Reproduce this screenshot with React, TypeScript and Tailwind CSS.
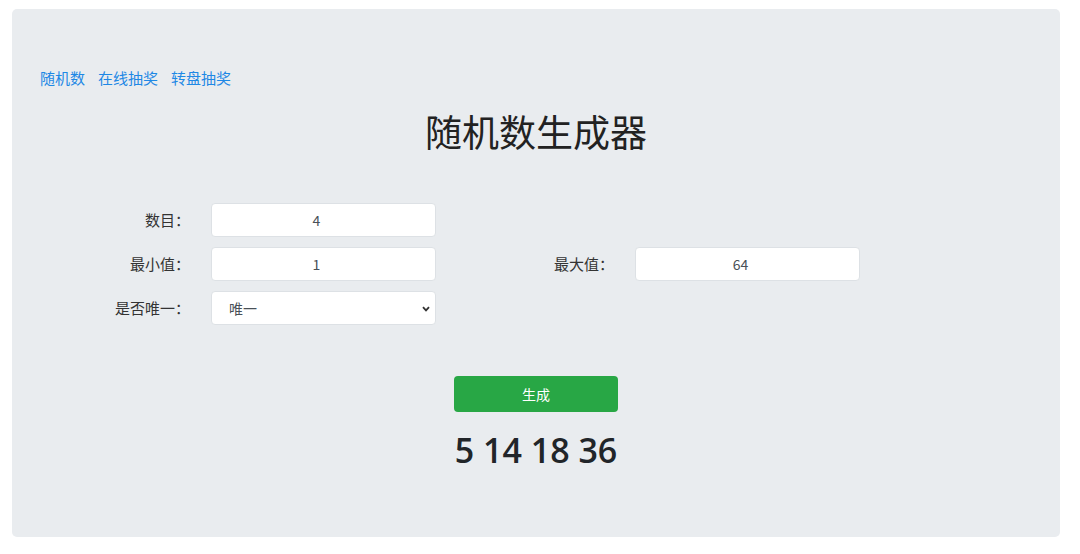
const cjk = "font-['Microsoft_YaHei','Noto_Sans_CJK_SC',sans-serif]"

function Field({ label, value }: { label: string; value: string }) {
  return (
    <div className="flex items-center">
      <label className="w-[178px] text-right text-[15px] text-[#333]">{label}</label>
      <input
        readOnly
        value={value}
        className="ml-[21px] w-[225px] h-[34px] rounded-[4px] border border-[#dde1e5] bg-white pr-[14px] text-center text-[14px] text-[#495057] outline-none"
      />
    </div>
  )
}

export default function App() {
  return (
    <div className={`bg-white pt-[9px] px-[12px] pb-[17px] ${cjk}`}>
      <div className="bg-[#e9ecef] rounded-[5px] w-[1048px] h-[528px] pt-[59px]">
        <nav className="flex gap-[13px] pl-[28px] text-[15px] text-[#1e88e5] leading-[20px]">
          <a href="#">随机数</a>
          <a href="#">在线抽奖</a>
          <a href="#">转盘抽奖</a>
        </nav>
        <h1 className="text-center text-[37px] leading-[48px] text-[#222] mt-[19px]">
          随机数生成器
        </h1>

        <div className="mt-[48px] flex flex-col gap-[10px]">
          <Field label="数目：" value="4" />
          <div className="flex">
            <Field label="最小值：" value="1" />
            <Field label="最大值：" value="64" />
          </div>
          <div className="flex items-center">
            <label className="w-[178px] text-right text-[15px] text-[#333]">是否唯一：</label>
            <div className="relative ml-[21px] w-[225px] h-[34px] rounded-[4px] border border-[#dde1e5] bg-white">
              <select className="appearance-none w-full h-full bg-transparent pl-[17px] text-[14px] text-[#495057] outline-none">
                <option>唯一</option>
                <option>不唯一</option>
              </select>
              <svg
                className="absolute right-[5px] top-[14px] pointer-events-none"
                width="8"
                height="6"
                viewBox="0 0 8 6"
              >
                <path d="M1 1.2 L4 4.4 L7 1.2" stroke="#333" strokeWidth="1.8" fill="none" />
              </svg>
            </div>
          </div>
        </div>

        <div className="mt-[51px] flex flex-col items-center">
          <button className="w-[164px] h-[36px] rounded-[4px] bg-[#28a745] text-white text-[14px]">
            生成
          </button>
          <div className="mt-[16px] text-[34px] leading-[44px] font-semibold text-[#212529] font-['Segoe_UI','Open_Sans',sans-serif]">
            5 14 18 36
          </div>
        </div>
      </div>
    </div>
  )
}
